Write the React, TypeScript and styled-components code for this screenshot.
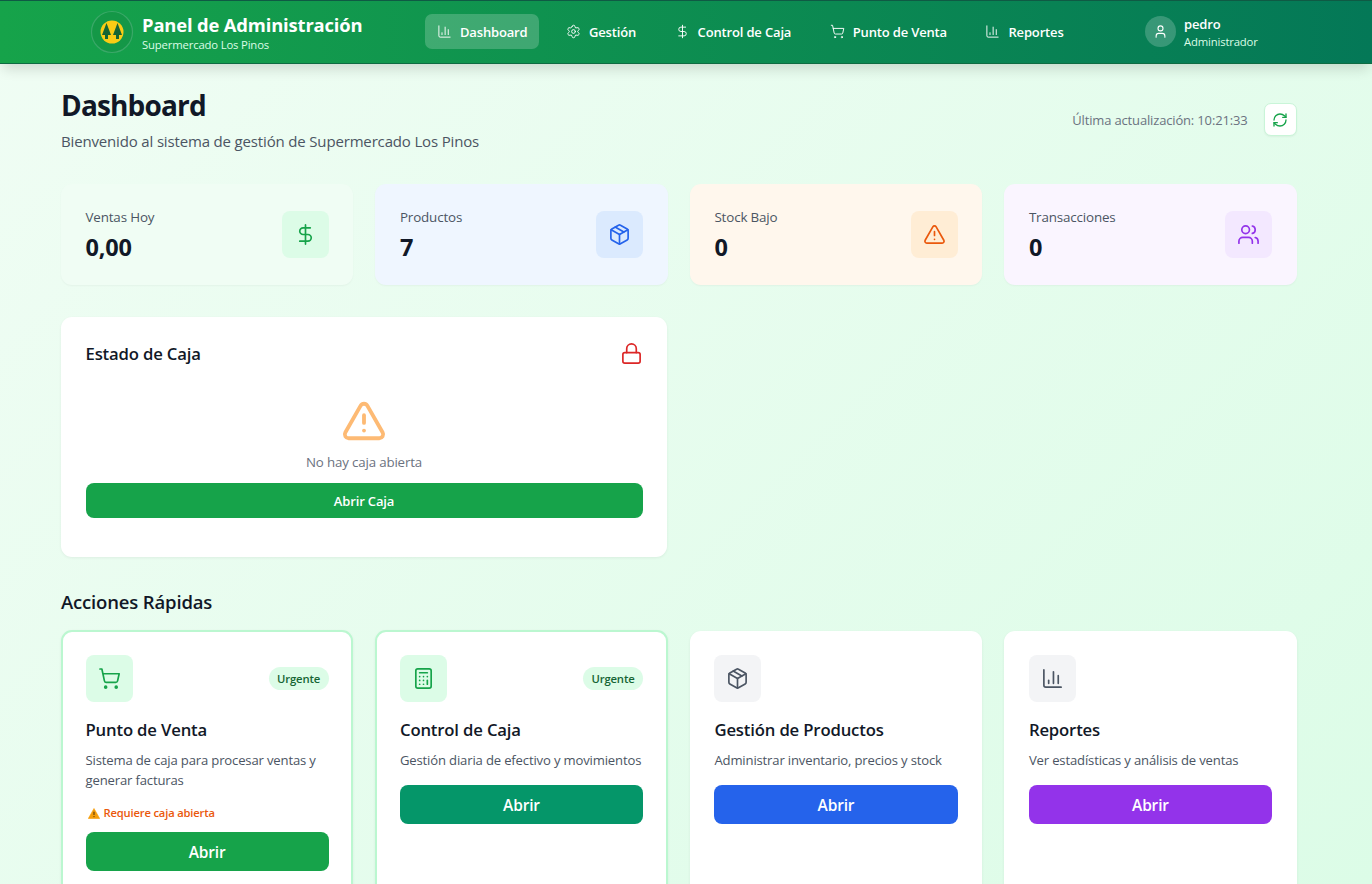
import React from 'react';
import styled, { createGlobalStyle } from 'styled-components';
import {
  ChartColumn, Settings, DollarSign, ShoppingCart, User, RefreshCw, Package,
  TriangleAlert, Users, Lock, Calculator,
} from 'lucide-react';

const Global = createGlobalStyle`
  html, body { margin: 0; padding: 0; height: 884px; overflow: hidden; }
  body { font-family: "Open Sans", "Noto Sans", sans-serif; letter-spacing: -0.01em; color: #111827; }
  * { box-sizing: border-box; }
`;

const Page = styled.div`
  width: 1372px;
  height: 884px;
  overflow: hidden;
  background: linear-gradient(135deg, #f0fdf4 0%, #dcfce7 100%);
`;

const Header = styled.header`
  height: 64px;
  border-bottom: 1px solid #0e6b42;
  background: linear-gradient(90deg, #16a34a 0%, #047857 100%);
  box-shadow: inset 0 1px 0 #0f5a44, 0 8px 12px -3px rgba(0, 0, 0, 0.14);
  display: flex;
  align-items: center;
  padding-left: 90px;
  color: #fff;
`;

const Brand = styled.div`
  display: flex;
  align-items: center;
  gap: 8px;
  width: 335px;
`;

const BrandText = styled.div`
  display: flex;
  flex-direction: column;
`;

const BrandTitle = styled.div`
  font-size: 18.4px;
  line-height: 25px;
  font-weight: 700;
`;

const BrandSub = styled.div`
  font-size: 11.3px;
  line-height: 15px;
  color: #dcfce7;
`;

const Nav = styled.nav`
  display: flex;
  align-items: center;
  gap: 15.5px;
  width: 720px;
`;

const NavItem = styled.a<{ $active?: boolean }>`
  display: flex;
  align-items: center;
  gap: 8px;
  height: 35px;
  padding: 0 11px 0 12px;
  border-radius: 7px;
  font-size: 13px;
  font-weight: 600;
  color: #fff;
  background: ${(p) => (p.$active ? 'rgba(255,255,255,0.2)' : 'transparent')};
`;

const UserBox = styled.div`
  display: flex;
  align-items: center;
  gap: 8px;
`;

const Avatar = styled.div`
  width: 31px;
  height: 31px;
  border-radius: 50%;
  background: rgba(255, 255, 255, 0.2);
  display: flex;
  align-items: center;
  justify-content: center;
`;

const UserText = styled.div`
  display: flex;
  flex-direction: column;
  padding-top: 2px;
`;

const UserName = styled.div`
  font-size: 13px;
  line-height: 17px;
  font-weight: 600;
`;

const UserRole = styled.div`
  font-size: 11.3px;
  line-height: 17px;
  color: #dcfce7;
`;

const Main = styled.main`
  width: 1235.5px;
  margin-left: 61px;
`;

const TitleRow = styled.div`
  display: flex;
  justify-content: space-between;
  align-items: flex-start;
  padding-top: 21px;
  height: 120px;
`;

const PageTitle = styled.h1`
  margin: 0;
  font-size: 28px;
  line-height: 40px;
  font-weight: 700;
  letter-spacing: -0.03em;
`;

const PageSub = styled.p`
  margin: 5px 0 0;
  font-size: 15px;
  line-height: 22px;
  color: #4b5563;
`;

const Updated = styled.div`
  display: flex;
  align-items: center;
  gap: 16px;
  font-size: 13px;
  color: #6b7280;
  margin-top: 18px;
`;

const RefreshBtn = styled.button`
  width: 33px;
  height: 33px;
  padding: 0;
  background: #fff;
  border: 1px solid #c9f5d8;
  border-radius: 7px;
  display: flex;
  align-items: center;
  justify-content: center;
  box-shadow: 0 1px 2px rgba(0, 0, 0, 0.05);
`;

const Grid4 = styled.div`
  display: grid;
  grid-template-columns: repeat(4, minmax(0, 1fr));
  column-gap: 22.4px;
`;

const Stat = styled.div<{ $bg: string }>`
  height: 101px;
  border-radius: 11px;
  background: ${(p) => p.$bg};
  padding: 0 24.5px;
  display: flex;
  align-items: center;
  justify-content: space-between;
  box-shadow: 0 1px 2px rgba(0, 0, 0, 0.04);
`;

const StatLabel = styled.div`
  font-size: 13.4px;
  line-height: 18px;
  color: #4b5563;
`;

const StatValue = styled.div`
  font-size: 23.5px;
  line-height: 30px;
  font-weight: 700;
  margin-top: 6px;
  color: #111827;
`;

const IconTile = styled.div<{ $bg: string }>`
  width: 47px;
  height: 47px;
  border-radius: 8px;
  background: ${(p) => p.$bg};
  display: flex;
  align-items: center;
  justify-content: center;
  flex: none;
`;

const CashCard = styled.section`
  width: 606px;
  height: 240px;
  margin-top: 32px;
  background: #fff;
  border-radius: 11px;
  padding: 23px 24.5px;
  box-shadow: 0 1px 3px rgba(0, 0, 0, 0.06);
`;

const CashHead = styled.div`
  display: flex;
  justify-content: space-between;
  align-items: center;
  height: 27px;
`;

const CardTitle = styled.h3`
  margin: 0;
  font-size: 16.7px;
  line-height: 27px;
  font-weight: 600;
  color: #111827;
`;

const CashBody = styled.div`
  display: flex;
  flex-direction: column;
  align-items: center;
  margin-top: 31px;
`;

const CashText = styled.p`
  margin: 8px 0 11px;
  font-size: 13.3px;
  line-height: 20px;
  color: #6b7280;
`;

const WideBtn = styled.button<{ $bg: string; $h: number; $size: number }>`
  display: block;
  width: 100%;
  height: ${(p) => p.$h}px;
  border: 0;
  padding: 0;
  border-radius: 8px;
  background: ${(p) => p.$bg};
  color: #fff;
  font-family: inherit;
  letter-spacing: inherit;
  font-size: ${(p) => p.$size}px;
  font-weight: 600;
`;

const SectionTitle = styled.h2`
  margin: 31px 0 16px;
  font-size: 18.5px;
  line-height: 27px;
  font-weight: 600;
  color: #111827;
`;

const Action = styled.div<{ $urgent?: boolean }>`
  height: 300px;
  background: #fff;
  border-radius: 11px;
  padding: ${(p) => (p.$urgent ? '23px 22.5px' : '24px 24.5px')};
  border: ${(p) => (p.$urgent ? '2px solid #bbf7d0' : '0')};
  margin-top: ${(p) => (p.$urgent ? '-1px' : '0')};
  box-shadow: 0 1px 3px rgba(0, 0, 0, 0.06);
`;

const ActionTop = styled.div`
  display: flex;
  justify-content: space-between;
  align-items: center;
`;

const Badge = styled.span`
  height: 23px;
  padding: 0 8.5px;
  border-radius: 999px;
  background: #dcfce7;
  color: #166534;
  font-size: 11.3px;
  font-weight: 600;
  display: flex;
  align-items: center;
`;

const ActionTitle = styled.h3`
  margin: 14px 0 0;
  font-size: 16.7px;
  line-height: 27px;
  font-weight: 600;
  color: #111827;
`;

const ActionDesc = styled.p`
  margin: 7px 0 15px;
  font-size: 13.1px;
  line-height: 20px;
  color: #4b5563;
`;

const Warn = styled.div`
  display: flex;
  align-items: center;
  gap: 4px;
  padding-left: 2px;
  font-size: 11.2px;
  line-height: 16px;
  font-weight: 600;
  color: #ea580c;
  margin: 11px 0 11px;
`;

const Logo = () => (
  <svg width="44" height="44" viewBox="0 0 44 44" aria-hidden="true">
    <circle cx="22" cy="22" r="20.5" fill="#15803d" fillOpacity="0.25" stroke="#3aa868" strokeWidth="1.2" />
    <circle cx="22" cy="22" r="11.5" fill="#facc15" />
    <path d="M16.5 13 L21 25 H18 V29 H15 V25 H12 Z" fill="#166534" />
    <path d="M27.5 13 L32 25 H29 V29 H26 V25 H23 Z" fill="#166534" />
  </svg>
);

const WarnGlyph = () => (
  <svg width="12" height="11" viewBox="0 0 12 11" aria-hidden="true">
    <path d="M6 0.5 L11.7 10.5 H0.3 Z" fill="#f59e0b" stroke="#f59e0b" strokeLinejoin="round" strokeWidth="0.6" />
    <path d="M6 3.8 V7" stroke="#5b3a0a" strokeWidth="1.1" />
    <circle cx="6" cy="8.6" r="0.65" fill="#5b3a0a" />
  </svg>
);

const navItems = [
  { label: 'Dashboard', Icon: ChartColumn, active: true },
  { label: 'Gestión', Icon: Settings },
  { label: 'Control de Caja', Icon: DollarSign },
  { label: 'Punto de Venta', Icon: ShoppingCart },
  { label: 'Reportes', Icon: ChartColumn },
];

const stats = [
  { label: 'Ventas Hoy', value: '0,00', bg: '#f0fdf4', tile: '#dcfce7', color: '#16a34a', Icon: DollarSign },
  { label: 'Productos', value: '7', bg: '#eff6ff', tile: '#dbeafe', color: '#2563eb', Icon: Package },
  { label: 'Stock Bajo', value: '0', bg: '#fff7ed', tile: '#ffedd5', color: '#ea580c', Icon: TriangleAlert },
  { label: 'Transacciones', value: '0', bg: '#faf5ff', tile: '#f3e8ff', color: '#9333ea', Icon: Users },
];

const actions = [
  { title: 'Punto de Venta', desc: 'Sistema de caja para procesar ventas y generar facturas', Icon: ShoppingCart, tile: '#dcfce7', color: '#16a34a', btn: '#16a34a', urgent: true, warn: true },
  { title: 'Control de Caja', desc: 'Gestión diaria de efectivo y movimientos', Icon: Calculator, tile: '#dcfce7', color: '#16a34a', btn: '#059669', urgent: true },
  { title: 'Gestión de Productos', desc: 'Administrar inventario, precios y stock', Icon: Package, tile: '#f3f4f6', color: '#4b5563', btn: '#2563eb' },
  { title: 'Reportes', desc: 'Ver estadísticas y análisis de ventas', Icon: ChartColumn, tile: '#f3f4f6', color: '#4b5563', btn: '#9333ea' },
];

export default function App() {
  return (
    <Page>
      <Global />
      <Header>
        <Brand>
          <Logo />
          <BrandText>
            <BrandTitle>Panel de Administración</BrandTitle>
            <BrandSub>Supermercado Los Pinos</BrandSub>
          </BrandText>
        </Brand>
        <Nav>
          {navItems.map(({ label, Icon, active }) => (
            <NavItem key={label} $active={active}>
              <Icon size={15} strokeWidth={1.5} />
              {label}
            </NavItem>
          ))}
        </Nav>
        <UserBox>
          <Avatar><User size={15} strokeWidth={1.75} /></Avatar>
          <UserText>
            <UserName>pedro</UserName>
            <UserRole>Administrador</UserRole>
          </UserText>
        </UserBox>
      </Header>
      <Main>
        <TitleRow>
          <div>
            <PageTitle>Dashboard</PageTitle>
            <PageSub>Bienvenido al sistema de gestión de Supermercado Los Pinos</PageSub>
          </div>
          <Updated>
            Última actualización: 10:21:33
            <RefreshBtn><RefreshCw size={16} color="#16a34a" strokeWidth={2} /></RefreshBtn>
          </Updated>
        </TitleRow>
        <Grid4>
          {stats.map(({ label, value, bg, tile, color, Icon }) => (
            <Stat key={label} $bg={bg}>
              <div>
                <StatLabel>{label}</StatLabel>
                <StatValue>{value}</StatValue>
              </div>
              <IconTile $bg={tile}><Icon size={23} color={color} strokeWidth={1.75} /></IconTile>
            </Stat>
          ))}
        </Grid4>
        <CashCard>
          <CashHead>
            <CardTitle>Estado de Caja</CardTitle>
            <Lock size={23} color="#dc2626" strokeWidth={1.75} />
          </CashHead>
          <CashBody>
            <TriangleAlert size={46} color="#fdba74" strokeWidth={2} />
            <CashText>No hay caja abierta</CashText>
            <WideBtn $bg="#16a34a" $h={35} $size={13}>Abrir Caja</WideBtn>
          </CashBody>
        </CashCard>
        <SectionTitle>Acciones Rápidas</SectionTitle>
        <Grid4>
          {actions.map(({ title, desc, Icon, tile, color, btn, urgent, warn }) => (
            <Action key={title} $urgent={urgent}>
              <ActionTop>
                <IconTile $bg={tile}><Icon size={23} color={color} strokeWidth={1.75} /></IconTile>
                {urgent && <Badge>Urgente</Badge>}
              </ActionTop>
              <ActionTitle>{title}</ActionTitle>
              <ActionDesc>{desc}</ActionDesc>
              {warn && <Warn><WarnGlyph />Requiere caja abierta</Warn>}
              <WideBtn $bg={btn} $h={39} $size={15.5}>Abrir</WideBtn>
            </Action>
          ))}
        </Grid4>
      </Main>
    </Page>
  );
}
